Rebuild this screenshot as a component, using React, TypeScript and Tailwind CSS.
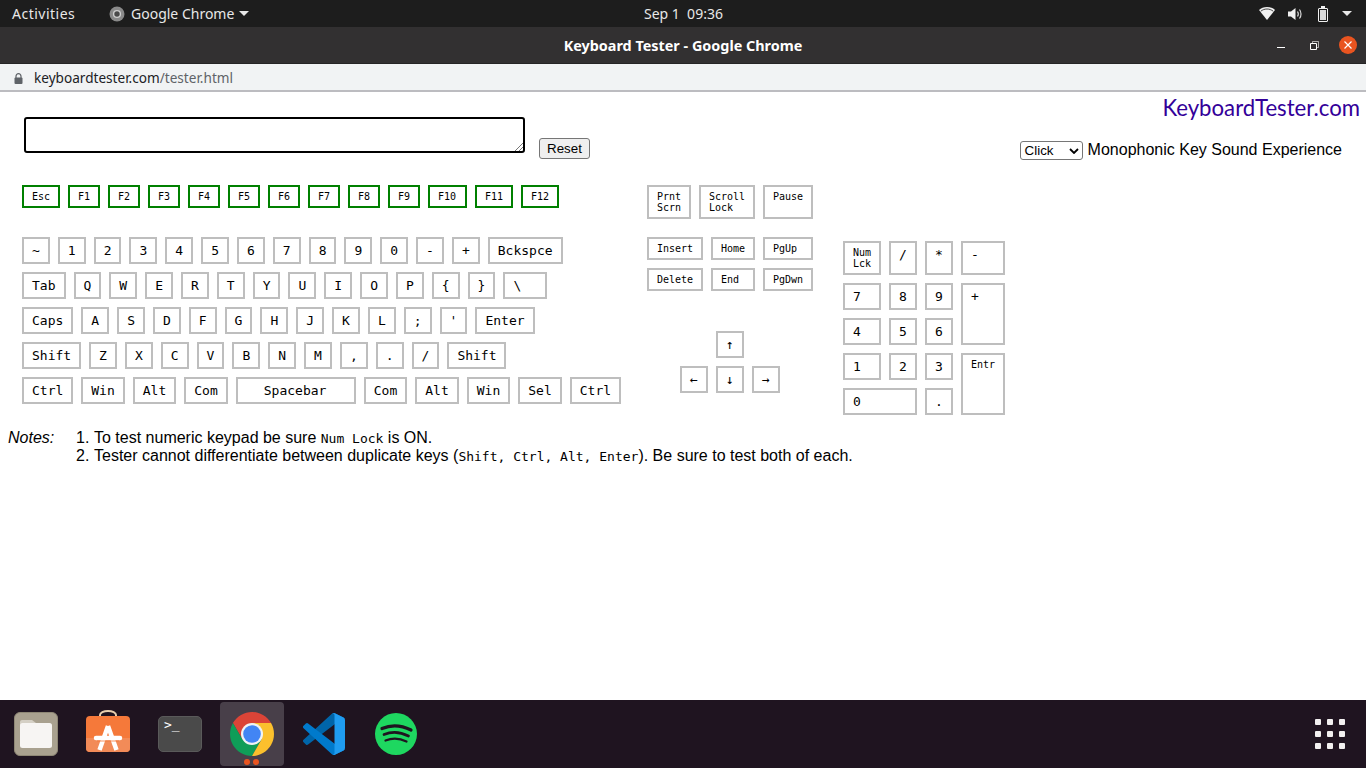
import React from 'react';

const mono = "font-['DejaVu_Sans_Mono',monospace]";

type KeyProps = {
  label: React.ReactNode;
  w?: string;
  green?: boolean;
  small?: boolean;
  cls?: string;
};

function Key({ label, w = 'w-[27.83px]', green, small, cls = 'h-[27px]' }: KeyProps) {
  return (
    <div
      className={`${w} ${cls} shrink-0 border-2 pl-2 ${mono} text-black whitespace-pre ${
        green ? 'border-[#008000]' : 'border-[#bebebe]'
      } ${small ? 'text-[10px] leading-[11px] pt-[4px]' : 'text-[13px] leading-[16px] pt-[4px]'}`}
    >
      {label}
    </div>
  );
}

const fnRow: [string, string][] = [
  ['Esc', 'w-[38px]'], ['F1', 'w-[32px]'], ['F2', 'w-[32px]'], ['F3', 'w-[32px]'], ['F4', 'w-[32px]'],
  ['F5', 'w-[32px]'], ['F6', 'w-[32px]'], ['F7', 'w-[32px]'], ['F8', 'w-[32px]'], ['F9', 'w-[32px]'],
  ['F10', 'w-[39px]'], ['F11', 'w-[38px]'], ['F12', 'w-[38px]'],
];

const rows: [React.ReactNode, string?][][] = [
  [['~'], ['1'], ['2'], ['3'], ['4'], ['5'], ['6'], ['7'], ['8'], ['9'], ['0'], ['-'], ['+'], ['Bckspce', 'w-[74.8px]']],
  [['Tab', 'w-[43.5px]'], ['Q'], ['W'], ['E'], ['R'], ['T'], ['Y'], ['U'], ['I'], ['O'], ['P'], ['{'], ['}'], ['\\', 'w-[43.5px]']],
  [['Caps', 'w-[51.3px]'], ['A'], ['S'], ['D'], ['F'], ['G'], ['H'], ['J'], ['K'], ['L'], [';'], ["'"], ['Enter', 'w-[59.1px]']],
  [['Shift', 'w-[59.1px]'], ['Z'], ['X'], ['C'], ['V'], ['B'], ['N'], ['M'], [','], ['.'], ['/'], ['Shift', 'w-[59.1px]']],
  [
    ['Ctrl', 'w-[51.3px]'], ['Win', 'w-[43.5px]'], ['Alt', 'w-[43.5px]'], ['Com', 'w-[43.5px]'],
    [<span className="ml-[18px]">Spacebar</span>, 'w-[120px]'],
    ['Com', 'w-[43.5px]'], ['Alt', 'w-[43.5px]'], ['Win', 'w-[43.5px]'], ['Sel', 'w-[43.5px]'], ['Ctrl', 'w-[51.3px]'],
  ],
];

function ChromeIcon() {
  return (
    <svg width="44" height="44" viewBox="0 0 44 44">
      <path d="M2.95 11A22 22 0 0 1 41.05 11H22L12.47 27.5Z" fill="#db4437" />
      <path d="M2.95 11A22 22 0 0 0 22 44L31.53 27.5H12.47Z" fill="#0f9d58" />
      <path d="M41.05 11A22 22 0 0 1 22 44L31.53 27.5 22 11Z" fill="#fbc02d" />
      <circle cx="22" cy="22" r="11" fill="#f1f3f4" />
      <circle cx="22" cy="22" r="8.8" fill="#4285f4" />
    </svg>
  );
}

function TopBar() {
  return (
    <div className="relative h-[27px] bg-[#1d1d1d] flex items-center text-[#e8e8e8] text-[14px] font-['Noto_Sans',sans-serif]">
      <span className="ml-3 w-[97px] tracking-[0.5px]">Activities</span>
      <svg width="16" height="16" viewBox="0 0 16 16">
        <circle cx="8" cy="8" r="7.5" fill="#8a8a8a" />
        <circle cx="8" cy="8" r="3.4" fill="#4a4a4a" stroke="#cfcfcf" strokeWidth="1.4" />
      </svg>
      <span className="ml-[6px]">Google Chrome</span>
      <div className="ml-[5px] w-0 h-0 border-x-[5px] border-x-transparent border-t-[5px] border-t-[#e8e8e8]" />
      <span className="absolute left-[644px] whitespace-pre">Sep 1  09:36</span>
      <div className="ml-auto mr-[14px] flex items-center">
        <svg width="16" height="13" viewBox="0 0 16 13" className="mr-[13px]">
          <path d="M0 3C2 1.200 4.800 0 8 0s6 1.200 8 3L8 13Z" fill="#f0f0f0" />
          <path d="M1.800 4.200C3.400 2.900 5.600 2 8 2s4.600.9 6.200 2.200" fill="none" stroke="#1d1d1d" strokeWidth="0.8" />
        </svg>
        <svg width="15" height="14" viewBox="0 0 15 14" className="mr-[15px]" fill="none">
          <path d="M0 4.500h3L7.500 1v12L3 9.500H0Z" fill="#f0f0f0" />
          <path d="M9.500 4.500c1 1.500 1 3.500 0 5M11.500 2.500c2 2.500 2 6.500 0 9" stroke="#d8d8d8" strokeWidth="1.200" />
        </svg>
        <div className="mr-[14px] mt-[2px] w-[10px] h-[14px] border border-[#f0f0f0] rounded-[1px] p-px relative">
          <div className="absolute -top-[3px] left-[2px] w-[4px] h-[2px] bg-[#f0f0f0]" />
          <div className="w-full h-full bg-[#d8d8d8]" />
        </div>
        <div className="w-0 h-0 border-x-[5px] border-x-transparent border-t-[5px] border-t-[#e8e8e8]" />
      </div>
    </div>
  );
}

function TitleBar() {
  return (
    <div className="relative h-[37px] pt-[2px] bg-[#323031] border-b border-[#252525] flex items-center justify-center">
      <span className="text-white text-[14.4px] font-bold font-['Noto_Sans',sans-serif]">Keyboard Tester - Google Chrome</span>
      <div className="absolute right-[9px] top-[9px] flex items-center">
        <div className="w-[8px] h-px bg-white mr-[25px] mt-[4px]" />
        <svg width="9" height="9" viewBox="0 0 9 9" fill="none" stroke="#fff" className="mr-[20px]">
          <path d="M.5 2.500h6v6h-6Z" />
          <path d="M2.500 2V.5h6v6H7" opacity="0.6" />
        </svg>
        <div className="w-[18px] h-[18px] rounded-full bg-[#e95420] flex items-center justify-center">
          <svg width="8" height="8" viewBox="0 0 8 8" stroke="#fff" strokeWidth="1.200">
            <path d="M.5.5l7 7M7.500.5l-7 7" />
          </svg>
        </div>
      </div>
    </div>
  );
}

function UrlBar() {
  return (
    <div className="h-[28px] pt-[2px] bg-[#f1f3f4] border-b-2 border-[#bcbcc0] flex items-center pl-[14px] text-[13.6px] font-['Noto_Sans',sans-serif]">
      <svg width="9" height="11" viewBox="0 0 9 11" className="mr-[11px]">
        <path d="M2 5V3.200a2.500 2.500 0 0 1 5 0V5" fill="none" stroke="#5f6368" strokeWidth="1.200" />
        <rect x="0.500" y="4.500" width="8" height="6.500" rx="1" fill="#5f6368" />
      </svg>
      <span className="text-[#202124]">keyboardtester.com</span>
      <span className="text-[#5f6368]">/tester.html</span>
    </div>
  );
}

function MainKeys() {
  return (
    <div className="pl-[22px] w-[625px] shrink-0">
      <div className="flex gap-[8px]">
        {fnRow.map(([label, w]) => (
          <Key key={label} label={label} w={w} green small cls="h-[23px]" />
        ))}
      </div>
      <div className="mt-[29px] flex flex-col gap-[8px]">
        {rows.map((row, i) => (
          <div key={i} className="flex gap-[8px]">
            {row.map(([label, w], j) => (
              <Key key={j} label={label} w={w} />
            ))}
          </div>
        ))}
      </div>
    </div>
  );
}

function NavKeys() {
  return (
    <div className="ml-[22px] w-[166px] shrink-0">
      <div className="flex gap-[8px]">
        <Key label={'Prnt\nScrn'} w="w-[44px]" small cls="h-[34px]" />
        <Key label={'Scroll\nLock'} w="w-[56px]" small cls="h-[34px]" />
        <Key label="Pause" w="w-[50px]" small cls="h-[34px]" />
      </div>
      <div className="mt-[18px] flex gap-[8px]">
        <Key label="Insert" w="w-[56px]" small cls="h-[23px]" />
        <Key label="Home" w="w-[44px]" small cls="h-[23px]" />
        <Key label="PgUp" w="w-[50px]" small cls="h-[23px]" />
      </div>
      <div className="mt-[8px] flex gap-[8px]">
        <Key label="Delete" w="w-[56px]" small cls="h-[23px]" />
        <Key label="End" w="w-[44px]" small cls="h-[23px]" />
        <Key label="PgDwn" w="w-[50px]" small cls="h-[23px]" />
      </div>
      <div className="mt-[40px] pl-[33px] flex flex-col gap-[8px]">
        <div className="pl-[36px]">
          <Key label="↑" w="w-[28px]" />
        </div>
        <div className="flex gap-[8px]">
          <Key label="←" w="w-[28px]" />
          <Key label="↓" w="w-[28px]" />
          <Key label="→" w="w-[28px]" />
        </div>
      </div>
    </div>
  );
}

function NumPad() {
  return (
    <div className="ml-[30px] mt-[56px] grid grid-cols-[38px_28px_28px_44px] grid-rows-[34px_27px_27px_27px_27px] gap-[8px]">
      <Key label={'Num\nLck'} w="w-full" small cls="h-full" />
      <Key label="/" w="w-full" cls="h-full" />
      <Key label="*" w="w-full" cls="h-full" />
      <Key label="-" w="w-full" cls="h-full" />
      <Key label="7" w="w-full" cls="h-full" />
      <Key label="8" w="w-full" cls="h-full" />
      <Key label="9" w="w-full" cls="h-full" />
      <Key label="+" w="w-full" cls="h-full row-span-2" />
      <Key label="4" w="w-full" cls="h-full" />
      <Key label="5" w="w-full" cls="h-full" />
      <Key label="6" w="w-full" cls="h-full" />
      <Key label="1" w="w-full" cls="h-full" />
      <Key label="2" w="w-full" cls="h-full" />
      <Key label="3" w="w-full" cls="h-full" />
      <Key label="Entr" w="w-full" small cls="h-full row-span-2" />
      <Key label="0" w="w-full" cls="h-full col-span-2" />
      <Key label="." w="w-full" cls="h-full" />
    </div>
  );
}

function Code({ children }: { children: React.ReactNode }) {
  return <span className={`${mono} text-[13px] leading-none`}>{children}</span>;
}

function Page() {
  return (
    <div className="flex-1 bg-white text-black font-['Liberation_Sans',sans-serif] text-[16px] overflow-hidden">
      <div className="flex justify-end pr-[6px] h-[19px]">
        <span className="text-[#330099] text-[22.2px] leading-[32px] font-['Lato',sans-serif]">KeyboardTester.com</span>
      </div>
      <div className="flex items-end h-[42px] pl-[24px]">
        <div className="w-[501px] h-[36px] border-2 border-black rounded-[3px] relative">
          <svg width="8" height="8" viewBox="0 0 8 8" className="absolute right-0 bottom-0" stroke="#777">
            <path d="M0 8l8-8M4 8l4-4" />
          </svg>
        </div>
        <button className="ml-[14px] w-[51px] h-[21px] mb-[-6px] border border-[#767676] bg-[#efefef] rounded-[3px] text-[13.33px] leading-none">
          Reset
        </button>
        <div className="ml-auto mr-[24px] flex items-start mb-[-7px]">
          <div className="w-[63px] h-[19px] border border-[#767676] rounded-[3px] flex items-center justify-between pl-[4px] pr-[3px] text-[13.33px]">
            <span>Click</span>
            <svg width="10" height="6" viewBox="0 0 10 6" fill="none" stroke="#000" strokeWidth="1.800">
              <path d="M1 1l4 4 4-4" />
            </svg>
          </div>
          <span className="ml-[5px] leading-[18px]">Monophonic Key Sound Experience</span>
        </div>
      </div>
      <div className="flex mt-[32px]">
        <MainKeys />
        <NavKeys />
        <NumPad />
      </div>
      <div className="flex mt-[14px] pl-[8px] leading-[18px]">
        <em className="w-[68px]">Notes:</em>
        <ol>
          <li className="flex">
            <span className="w-[18px]">1.</span>
            <span>To test numeric keypad be sure <Code>Num Lock</Code> is ON.</span>
          </li>
          <li className="flex">
            <span className="w-[18px]">2.</span>
            <span>
              Tester cannot differentiate between duplicate keys (<Code>Shift, Ctrl, Alt, Enter</Code>). Be sure to test both of each.
            </span>
          </li>
        </ol>
      </div>
    </div>
  );
}

function Dock() {
  return (
    <div className="h-[68px] bg-[#1f1420] flex items-center shrink-0">
      <div className="ml-[14px] w-[44px] h-[44px] rounded-[6px] bg-[#a9a18f] border border-[#8e8775] flex items-center justify-center">
        <svg width="32" height="28" viewBox="0 0 32 28">
          <path d="M0 2a2 2 0 0 1 2-2h10l4 3v6H0Z" fill="#d5d0c5" />
          <rect x="0" y="3" width="32" height="25" rx="2.500" fill="#f7f5f3" />
        </svg>
      </div>
      <div className="ml-[28px] w-[44px] h-[46px] mb-[2px]">
        <svg width="44" height="46" viewBox="0 0 44 46" fill="none">
          <path d="M14 7V5a8 4 0 0 1 16 0v2" stroke="#e8cfae" strokeWidth="2" />
          <rect y="6" width="44" height="36" rx="4" fill="#f5793a" />
          <path d="M0 28h44v10a4 4 0 0 1-4 4H4a4 4 0 0 1-4-4Z" fill="#f28b58" />
          <path d="M22 16L13.500 40M22 16l8.500 24" stroke="#fff" strokeWidth="4.500" />
          <path d="M10 28h24" stroke="#fff" strokeWidth="4.500" strokeLinecap="round" />
          <path d="M11 31h22" stroke="#f5793a" strokeWidth="0.800" />
        </svg>
      </div>
      <div className="ml-[28px] w-[44px] h-[36px] rounded-[5px] bg-[#4a4a4a] border border-[#5a5a5a] relative">
        <span className="absolute left-[5px] top-px text-white text-[13px] leading-[14px] font-['DejaVu_Sans_Mono',monospace]">&gt;_</span>
      </div>
      <div className="ml-[18px] w-[64px] h-[64px] rounded-[4px] bg-[#483f49] relative flex items-center justify-center">
        <div className="h-[44px]">
          <ChromeIcon />
        </div>
        <div className="absolute bottom-px left-[24px] flex gap-[3px]">
          <div className="w-[6px] h-[6px] rounded-full bg-[#e95420]" />
          <div className="w-[6px] h-[6px] rounded-full bg-[#e95420]" />
        </div>
      </div>
      <div className="ml-[19px] w-[42px] h-[42px]">
        <svg width="42" height="42" viewBox="0 0 100 100">
          <path d="M96.461 10.796 75.857.876a6.23 6.23 0 0 0-7.107 1.207l-67.451 61.5a4.167 4.167 0 0 0 .004 6.162l5.51 5.009a4.167 4.167 0 0 0 5.32.236l81.228-61.62c2.725-2.067 6.639-.124 6.639 3.297v-.24a6.25 6.25 0 0 0-3.539-5.63Z" fill="#0065a9" />
          <path d="M96.461 89.204 75.857 99.124a6.23 6.23 0 0 1-7.107-1.207l-67.451-61.5a4.167 4.167 0 0 1 .004-6.162l5.51-5.009a4.167 4.167 0 0 1 5.32-.236l81.228 61.62c2.725 2.067 6.639.124 6.639-3.297v.24a6.25 6.25 0 0 1-3.539 5.63Z" fill="#007acc" />
          <path d="M75.858 99.126a6.232 6.232 0 0 1-7.108-1.21c2.306 2.307 6.25.673 6.25-2.59V4.672c0-3.262-3.944-4.896-6.25-2.59a6.232 6.232 0 0 1 7.108-1.208l20.6 9.908A6.25 6.25 0 0 1 100 16.413v67.174a6.25 6.25 0 0 1-3.541 5.633l-20.601 9.906Z" fill="#1f9cf0" />
        </svg>
      </div>
      <div className="ml-[30px] w-[42px] h-[42px]">
        <svg width="42" height="42" viewBox="0 0 42 42" fill="none" stroke="#1f1420" strokeLinecap="round">
          <circle cx="21" cy="21" r="21" fill="#1ed760" stroke="none" />
          <path d="M7 15.500Q21 9.500 36 17" strokeWidth="3.200" />
          <path d="M9 21.500Q21 16.500 33.500 23" strokeWidth="2.700" />
          <path d="M10.500 27.500Q21 23.500 31.500 28.500" strokeWidth="2.200" />
        </svg>
      </div>
      <div className="ml-auto mr-[21px] grid grid-cols-3 gap-[6px]">
        {Array.from({ length: 9 }).map((_, i) => (
          <div key={i} className="w-[6px] h-[6px] rounded-[1px] bg-[#f2f0f0]" />
        ))}
      </div>
    </div>
  );
}

export default function App() {
  return (
    <div className="w-[1366px] h-[768px] flex flex-col overflow-hidden">
      <TopBar />
      <TitleBar />
      <UrlBar />
      <Page />
      <Dock />
    </div>
  );
}
